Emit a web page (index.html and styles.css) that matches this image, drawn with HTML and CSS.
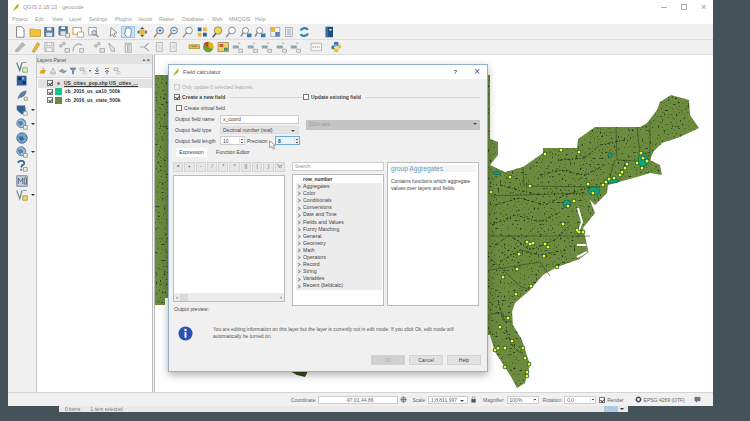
FILE: index.html
```html
<!DOCTYPE html>
<html lang="en">
<head>
    <meta charset="UTF-8">
    <title>QGIS 2.18.13 - geocode</title>
    <link rel="stylesheet" href="styles.css">
</head>
<body>
    <!-- icons used in the toolbars -->
    <svg class="defs" width="0" height="0">
        <symbol id="i-new" viewBox="0 0 16 16"><path d="M3 1h7l3 3v11H3z" fill="#fff" stroke="#666"/></symbol>
        <symbol id="i-folder" viewBox="0 0 16 16"><path d="M1 4h5l1 1h8v9H1z" fill="#f2c23c" stroke="#c8962a"/></symbol>
        <symbol id="i-save" viewBox="0 0 16 16"><path d="M2 2h12v12H2z" fill="#5f7f9f" stroke="#3d556e"/><path d="M5 2h6v4H5z" fill="#e8eef4"/><path d="M4 9h8v5H4z" fill="#dfe5ea"/></symbol>
        <symbol id="i-saveas" viewBox="0 0 16 16"><path d="M1 1h11v11H1z" fill="#5f7f9f" stroke="#3d556e"/><path d="M4 1h5v3H4z" fill="#e8eef4"/><path d="M3 7h7v5H3z" fill="#dfe5ea"/><path d="M10 10h5v5h-5z" fill="#f4f4f4" stroke="#7aa03c"/></symbol>
        <symbol id="i-layout" viewBox="0 0 16 16"><path d="M1 2h11v9H1z" fill="#fff" stroke="#e0a030" stroke-width="1.5"/><path d="M7 8h8v7H7z" fill="#fff" stroke="#999"/></symbol>
        <symbol id="i-find" viewBox="0 0 16 16"><path d="M2 2h10v10H2z" fill="#fff" stroke="#888"/><circle cx="9" cy="9" r="3" fill="#cfe0ee" stroke="#667"/><path d="M11 11l4 4" stroke="#a87" stroke-width="2"/></symbol>
        <symbol id="i-touch" viewBox="0 0 16 16"><path d="M5 2l8 7-4 1 2 4-2 1-2-4-3 3z" fill="#f4f4f4" stroke="#777"/></symbol>
        <symbol id="i-hand" viewBox="0 0 16 16"><path d="M4 8V4l1-1 1 1V2l1-1 1 1v1l1-1 1 1v1l1-1 1 1v6l-2 5H6L3 10z" fill="#fff" stroke="#4a6a8a"/></symbol>
        <symbol id="i-pan" viewBox="0 0 16 16"><circle cx="8" cy="8" r="4" fill="#e8b830"/><path d="M8 1l3 3H5zM8 15l-3-3h6zM1 8l3-3v6zM15 8l-3 3V5z" fill="#3c6a9a"/></symbol>
        <symbol id="i-zin" viewBox="0 0 16 16"><circle cx="9" cy="6" r="4.5" fill="#d8e6f2" stroke="#557"/><path d="M6 9l-5 6" stroke="#b08a50" stroke-width="2"/><path d="M7 6h4M9 4v4" stroke="#3a6a9a"/></symbol>
        <symbol id="i-zout" viewBox="0 0 16 16"><circle cx="9" cy="6" r="4.5" fill="#d8e6f2" stroke="#557"/><path d="M6 9l-5 6" stroke="#b08a50" stroke-width="2"/><path d="M7 6h4" stroke="#3a6a9a"/></symbol>
        <symbol id="i-zplain" viewBox="0 0 16 16"><circle cx="9" cy="6" r="4.5" fill="#fff" stroke="#667"/><path d="M6 9l-5 6" stroke="#999" stroke-width="2"/></symbol>
        <symbol id="i-zlayer" viewBox="0 0 16 16"><path d="M2 2h5v5H2z" fill="#2f5f9f"/><path d="M9 2h5v5H9z" fill="#e8b830"/><path d="M2 9h5v5H2z" fill="#e8b830"/><path d="M9 9h5v5H9z" fill="#2f5f9f"/></symbol>
        <symbol id="i-zyellow" viewBox="0 0 16 16"><circle cx="9" cy="6" r="5" fill="#f2d84a" stroke="#776"/><path d="M6 10l-4 5" stroke="#556" stroke-width="2"/></symbol>
        <symbol id="i-zsheet" viewBox="0 0 16 16"><circle cx="7" cy="6" r="4" fill="#fff" stroke="#667"/><path d="M4 9l-3 5" stroke="#889" stroke-width="2"/><path d="M9 10h6v5H9z" fill="#3f78b0"/></symbol>
        <symbol id="i-table" viewBox="0 0 16 16"><path d="M2 2h12v12H2z" fill="#f3f3f3" stroke="#99a"/><path d="M2 2h6v6H2z" fill="#e8b830"/><path d="M8 8h6v6H8z" fill="#5a86b0"/></symbol>
        <symbol id="i-grid" viewBox="0 0 16 16"><path d="M3 2h9v12H3z" fill="#eee" stroke="#99a"/><path d="M5 5h5M5 8h5M5 11h5" stroke="#6a8aaa"/></symbol>
        <symbol id="i-refresh" viewBox="0 0 16 16"><path d="M13 5A6 6 0 0 0 3 6M3 11a6 6 0 0 0 10-1" fill="none" stroke="#2f7fb8" stroke-width="3"/></symbol>
        <symbol id="i-book" viewBox="0 0 16 16"><path d="M3 1h10v14H3z" fill="#1f4f80"/><path d="M5 1v14" stroke="#7ba0c4"/><path d="M8 4h3v2H8z" fill="#cfe"/></symbol>
        <symbol id="i-pencilg" viewBox="0 0 16 16"><path d="M2 12L11 2l3 3-9 9H2z" fill="#bbb" stroke="#999"/></symbol>
        <symbol id="i-pencily" viewBox="0 0 16 16"><path d="M4 14L11 2l3 2-7 11z" fill="#e8c030" stroke="#b89020"/></symbol>
        <symbol id="i-saveg" viewBox="0 0 16 16"><path d="M2 2h12v12H2z" fill="#ddd" stroke="#aaa"/><path d="M5 2h6v4H5zM4 9h8v5H4z" fill="#f2f2f2" stroke="#bbb"/></symbol>
        <symbol id="i-dotsg" viewBox="0 0 16 16"><path d="M2 5h3v3H2zM6 2h3v3H6zM9 10h6v5H9z" fill="#e4e4e4" stroke="#999"/></symbol>
        <symbol id="i-curveg" viewBox="0 0 16 16"><path d="M1 14C1 4 10 2 13 6" fill="none" stroke="#aaa" stroke-width="1.5"/><path d="M10 10h5v5h-5z" fill="#eee" stroke="#999"/></symbol>
        <symbol id="i-nodeg" viewBox="0 0 16 16"><path d="M2 3l7 6 1 5-5-1z" fill="#e6e6e6" stroke="#999"/></symbol>
        <symbol id="i-trash" viewBox="0 0 16 16"><path d="M3 3h10M4 5h8v10H4zM7 6v8M9 6v8" fill="#eee" stroke="#999"/></symbol>
        <symbol id="i-cutg" viewBox="0 0 16 16"><path d="M2 8h6l6-5M8 8l6 5" fill="none" stroke="#aaa" stroke-width="1.5"/></symbol>
        <symbol id="i-copyg" viewBox="0 0 16 16"><path d="M4 2h8v12H4z" fill="#eee" stroke="#aaa"/><path d="M6 5h4v6H6z" fill="#ddd"/></symbol>
        <symbol id="i-bar" viewBox="0 0 16 16"><path d="M1 5h14v5H1z" fill="#e9c13a" stroke="#a88c20"/><path d="M4 7h8" stroke="#665"/></symbol>
        <symbol id="i-pie" viewBox="0 0 16 16"><circle cx="8" cy="8" r="7" fill="#6f9f30"/><path d="M8 8V1a7 7 0 0 1 6 10z" fill="#e8b020"/><path d="M8 8L2 4a7 7 0 0 1 6-3z" fill="#c83a2a"/></symbol>
        <symbol id="i-labelc" viewBox="0 0 16 16"><path d="M1 2h14v12H1z" fill="#f0d060" stroke="#887"/><path d="M3 4h5v4H3z" fill="#c85a30"/><path d="M9 9h5v4H9z" fill="#4a8a6a"/></symbol>
        <symbol id="i-labelg" viewBox="0 0 16 16"><path d="M2 6h8v4H2z" fill="#8aa" /><path d="M9 3h3M10 11h5v4h-5z" fill="#eee" stroke="#999"/></symbol>
        <symbol id="i-boxg" viewBox="0 0 16 16"><path d="M1 3h14v10H1z" fill="#f7f7f7" stroke="#aaa"/><path d="M3 8h10" stroke="#777" stroke-dasharray="2 1"/></symbol>
        <symbol id="i-python" viewBox="0 0 16 16"><path d="M8 1C4 1 5 3 5 5h4v1H3C1 6 1 11 3 11h2V9c0-1 1-2 2-2h3c1 0 1-1 1-2V3c0-1-1-2-3-2z" fill="#3a76a8"/><path d="M8 15c4 0 3-2 3-4H7v-1h6c2 0 2-5 0-5h-2v2c0 1-1 2-2 2H6c-1 0-1 1-1 2v2c0 1 1 2 3 2z" fill="#e8c030"/></symbol>
        <symbol id="i-vector" viewBox="0 0 16 16"><path d="M1 2l4 11 3-11" fill="none" stroke="#5a7a90" stroke-width="1.6"/><path d="M9 2h5" stroke="#5a7a90"/><path d="M9 9h6v6H9z" fill="#e6f0d0" stroke="#7a9a40"/></symbol>
        <symbol id="i-vectory" viewBox="0 0 16 16"><path d="M1 2l4 11 3-11" fill="none" stroke="#6a8aa0" stroke-width="1.6"/><path d="M9 2h5" stroke="#5a7a90"/><path d="M9 9h6v6H9z" fill="#eed860" stroke="#a89030"/></symbol>
        <symbol id="i-raster" viewBox="0 0 16 16"><path d="M1 1h13v13H1z" fill="#2f5f9f"/><path d="M3 3h4v4H3zM9 8h4v4H9z" fill="#16305c"/><path d="M8 3h3v3H8z" fill="#8fb0d0"/></symbol>
        <symbol id="i-feather" viewBox="0 0 16 16"><path d="M2 14C3 7 8 2 14 2 14 8 9 12 4 12z" fill="#5f7f9f"/><path d="M11 11h4v4h-4z" fill="#eee" stroke="#7a9a40"/></symbol>
        <symbol id="i-shield" viewBox="0 0 16 16"><path d="M1 2h11l1 7-5 5-7-6z" fill="#34608f"/><path d="M10 10h5v5h-5z" fill="#eee" stroke="#999"/></symbol>
        <symbol id="i-globe" viewBox="0 0 16 16"><circle cx="7" cy="7" r="6" fill="#9fbfdc" stroke="#4a7098"/><path d="M3 5h5l1 3-4 2zM9 2l3 3" fill="#5f88ae" stroke="#4a7098"/><path d="M10 10h5v5h-5z" fill="#eee" stroke="#7a9a40"/></symbol>
        <symbol id="i-globed" viewBox="0 0 16 16"><circle cx="8" cy="8" r="7" fill="#7aa2c8" stroke="#33608c"/><path d="M3 6h6l2 4-5 2zM9 2l3 3" fill="#3a6a9a"/></symbol>
        <symbol id="i-query" viewBox="0 0 16 16"><path d="M3 4a4 3 0 1 1 5 3L7 10" fill="none" stroke="#3c6a9a" stroke-width="2.4"/><circle cx="7" cy="13" r="1.4" fill="#3c6a9a"/><path d="M10 10h5v5h-5z" fill="#eee" stroke="#7a9a40"/></symbol>
        <symbol id="i-mssql" viewBox="0 0 16 16"><path d="M1 1h14v14H1z" fill="#bcd0e0" stroke="#668"/><path d="M3 12V4l3 5 3-5v8M11 4h3v8h-3z" fill="none" stroke="#456"/></symbol>
        <symbol id="i-open" viewBox="0 0 16 16"><path d="M1 13l3-7h10l-3 7z" fill="#e8a020"/><path d="M7 2l4 4" stroke="#b86" stroke-width="2"/></symbol>
        <symbol id="i-style" viewBox="0 0 16 16"><path d="M3 14h10M8 2l5 10H3z" fill="#e4e4e4" stroke="#889"/></symbol>
        <symbol id="i-eye" viewBox="0 0 16 16"><path d="M1 8l6-4 2 4 6 0-6 4z" fill="#8aa" stroke="#567"/></symbol>
        <symbol id="i-filter" viewBox="0 0 16 16"><path d="M2 2h12l-5 6v6H7V8z" fill="#7a9aba" stroke="#456"/></symbol>
        <symbol id="i-expr" viewBox="0 0 16 16"><path d="M2 2h8v5H2z" fill="#e8e8e8" stroke="#889"/><path d="M8 9h6v5H8z" fill="#eee" stroke="#aab"/></symbol>
        <symbol id="i-expand" viewBox="0 0 16 16"><path d="M8 1v8M4 6l4 4 4-4" fill="none" stroke="#5a7a90" stroke-width="2"/><path d="M4 13h8" stroke="#5a7a90" stroke-width="2"/></symbol>
        <symbol id="i-collapse" viewBox="0 0 16 16"><path d="M8 15V7M4 10l4-4 4 4" fill="none" stroke="#5a7a90" stroke-width="2"/><path d="M4 3h8" stroke="#c89040" stroke-width="2"/></symbol>
        <symbol id="i-qgis" viewBox="0 0 16 16"><path d="M3 15C5 9 8 4 13 1c0 5-2 9-6 10" fill="#8db030" stroke="#e0b020"/></symbol>
        <symbol id="i-cross" viewBox="0 0 16 16"><circle cx="8" cy="8" r="6" fill="#b8c4c8" stroke="#556"/><path d="M8 1v14M1 8h14" stroke="#334"/></symbol>
        <symbol id="i-lock" viewBox="0 0 16 16"><path d="M3 7h10v8H3z" fill="#556"/><path d="M5 7V4a3 3 0 0 1 6 0v3" fill="none" stroke="#778" stroke-width="1.5"/></symbol>
        <symbol id="i-gear" viewBox="0 0 16 16"><circle cx="8" cy="8" r="5" fill="none" stroke="#445" stroke-width="3.4"/></symbol>
        <symbol id="i-bubble" viewBox="0 0 16 16"><path d="M2 3h12v8H8l-3 3v-3H2z" fill="#6a7a80" stroke="#445"/></symbol>
    </svg>

    <div class="screen">
        <div class="window">
            <div class="titlebar">
                <svg class="title-icon"><use href="#i-qgis"/></svg>
                <span>QGIS 2.18.13 - geocode</span>
                <div class="win-btns">
                    <span class="win-min"></span>
                    <span class="win-max"></span>
                    <span class="win-close">×</span>
                </div>
            </div>
            <div class="menubar">
                <span style="width:23px">Project</span><span style="width:17px">Edit</span><span style="width:17px">View</span><span style="width:20px">Layer</span><span style="width:26px">Settings</span><span style="width:23px">Plugins</span><span style="width:21px">Vector</span><span style="width:23px">Raster</span><span style="width:30px">Database</span><span style="width:17px">Web</span><span style="width:26px">MMQGIS</span><span>Help</span>
            </div>

            <div class="toolbar">
                <svg class="ic"><use href="#i-new"/></svg>
                <svg class="ic"><use href="#i-folder"/></svg>
                <svg class="ic"><use href="#i-save"/></svg>
                <svg class="ic"><use href="#i-saveas"/></svg>
                <svg class="ic"><use href="#i-layout"/></svg>
                <svg class="ic"><use href="#i-find"/></svg>
                <span class="sp6"></span>
                <svg class="ic"><use href="#i-touch"/></svg>
                <svg class="ic ic-on"><use href="#i-hand"/></svg>
                <svg class="ic"><use href="#i-pan"/></svg>
                <span class="sp2"></span>
                <svg class="ic"><use href="#i-zin"/></svg>
                <svg class="ic"><use href="#i-zout"/></svg>
                <svg class="ic"><use href="#i-zplain"/></svg>
                <svg class="ic"><use href="#i-zlayer"/></svg>
                <svg class="ic"><use href="#i-zyellow"/></svg>
                <svg class="ic"><use href="#i-zplain"/></svg>
                <svg class="ic"><use href="#i-zsheet"/></svg>
                <svg class="ic"><use href="#i-zsheet"/></svg>
                <svg class="ic"><use href="#i-table"/></svg>
                <svg class="ic"><use href="#i-grid"/></svg>
                <svg class="ic"><use href="#i-refresh"/></svg>
                <span class="sp11"></span>
                <svg class="ic"><use href="#i-book"/></svg>
            </div>
            <div class="toolbar">
                <svg class="ic"><use href="#i-pencilg"/></svg>
                <svg class="ic"><use href="#i-pencily"/></svg>
                <svg class="ic"><use href="#i-saveg"/></svg>
                <svg class="ic"><use href="#i-dotsg"/></svg>
                <svg class="ic"><use href="#i-curveg"/></svg>
                <span class="sp6"></span>
                <svg class="ic"><use href="#i-dotsg"/></svg>
                <svg class="ic"><use href="#i-nodeg"/></svg>
                <svg class="ic"><use href="#i-trash"/></svg>
                <span class="sp2"></span>
                <svg class="ic"><use href="#i-cutg"/></svg>
                <svg class="ic"><use href="#i-copyg"/></svg>
                <svg class="ic"><use href="#i-copyg"/></svg>
                <span class="sp6"></span>
                <svg class="ic"><use href="#i-bar"/></svg>
                <svg class="ic"><use href="#i-pie"/></svg>
                <svg class="ic"><use href="#i-labelc"/></svg>
                <svg class="ic"><use href="#i-labelg"/></svg>
                <svg class="ic"><use href="#i-labelg"/></svg>
                <svg class="ic"><use href="#i-labelg"/></svg>
                <svg class="ic"><use href="#i-labelg"/></svg>
                <svg class="ic"><use href="#i-labelg"/></svg>
                <span class="sp6"></span>
                <svg class="ic"><use href="#i-boxg"/></svg>
                <span class="sp6"></span>
                <svg class="ic"><use href="#i-python"/></svg>
            </div>

            <div class="main">
                <div class="sidetools">
                    <div class="st"><svg><use href="#i-vector"/></svg></div>
                    <div class="st"><svg><use href="#i-raster"/></svg></div>
                    <div class="st"><svg><use href="#i-feather"/></svg></div>
                    <div class="st"><svg><use href="#i-shield"/></svg><i></i></div>
                    <div class="st"><svg><use href="#i-globe"/></svg><i></i></div>
                    <div class="st"><svg><use href="#i-globed"/></svg></div>
                    <div class="st"><svg><use href="#i-globe"/></svg><i></i></div>
                    <div class="st"><svg><use href="#i-query"/></svg></div>
                    <div class="st"><svg><use href="#i-mssql"/></svg></div>
                    <div class="st"><svg><use href="#i-vectory"/></svg><i></i></div>
                </div>

                <div class="layers">
                    <div class="panel-head">
                        <span>Layers Panel</span>
                        <span class="panel-btns">▪ ×</span>
                    </div>
                    <div class="panel-tools">
                        <svg class="pt"><use href="#i-open"/></svg>
                        <svg class="pt"><use href="#i-style"/></svg>
                        <svg class="pt"><use href="#i-eye"/></svg>
                        <svg class="pt"><use href="#i-filter"/></svg>
                        <svg class="pt"><use href="#i-expr"/></svg>
                        <span class="pt-arrow"></span>
                        <svg class="pt"><use href="#i-expand"/></svg>
                        <svg class="pt"><use href="#i-collapse"/></svg>
                        <svg class="pt"><use href="#i-expr"/></svg>
                    </div>
                    <div class="layer-list">
                        <div class="layer layer-sel"><span class="chk on"></span><span class="dot"></span><u>US_cities_pop.shp US_cities_...</u></div>
                        <div class="layer"><span class="chk on"></span><span class="swatch sw-teal"></span>cb_2016_us_ua10_500k</div>
                        <div class="layer"><span class="chk on"></span><span class="swatch sw-green"></span>cb_2016_us_state_500k</div>
                    </div>
                </div>

                <div class="map">
                    <svg class="map-svg" viewBox="155 55 558 337">
                        <defs>
                            <clipPath id="land"><path d="M155 75H490V139L498 142 498 155 490 165 505 172 523 167 543 153 543 148 577 148 578 139 595 127 640 127 647 123 657 110 660 102 671 95 689 100 690 115 699 128 680 137 662 143 653 152 650 160 660 165 662 175 650 173 637 177 608 185 607 193 595 205 590 200 595 213 583 228 587 245 588 252 577 260 557 267 543 275 530 290 515 303 512 312 513 325 522 340 530 365 525 383 517 388 510 375 495 352 490 335H168V298H165V305H155Z"/></clipPath>
                            <filter id="specks" x="0" y="0" width="100%" height="100%" color-interpolation-filters="sRGB">
                                <feTurbulence type="fractalNoise" baseFrequency="0.5" numOctaves="2" seed="6"/>
                                <feColorMatrix values="0 0 0 0 .12  0 0 0 0 .22  0 0 0 0 .11  7 0 0 0 -4.4"/>
                            </filter>
                        </defs>
                        <path d="M155 75H490V139L498 142 498 155 490 165 505 172 523 167 543 153 543 148 577 148 578 139 595 127 640 127 647 123 657 110 660 102 671 95 689 100 690 115 699 128 680 137 662 143 653 152 650 160 660 165 662 175 650 173 637 177 608 185 607 193 595 205 590 200 595 213 583 228 587 245 588 252 577 260 557 267 543 275 530 290 515 303 512 312 513 325 522 340 530 365 525 383 517 388 510 375 495 352 490 335H168V298H165V305H155Z" class="land"/>
                        <rect x="155" y="75" width="558" height="320" filter="url(#specks)" clip-path="url(#land)"/>
                        <g class="states">
                            <path d="M523 167L524 186 600 187"/>
                            <path d="M490 196L585 193"/>
                            <path d="M616 127L617 160 637 161M637 127L640 155 650 152"/>
                            <path d="M615 160L608 182"/>
                            <path d="M490 236H590"/>
                            <path d="M490 270L540 262 550 276"/>
                            <path d="M490 258L520 286 530 290"/>
                            <path d="M490 314L503 313 504 321 512 322"/>
                            <path d="M650 122L650 160"/>
                        </g>
                        <path class="rivers" d="M495 205L520 198 545 205 565 195 590 187M492 225L515 215 540 222 560 212M495 245L510 235 530 250 555 240 570 225M500 262L520 250 540 255 565 250M540 175L560 170 585 175 605 165M560 160L585 158 600 145 625 140M500 185L518 190 540 195M506 330L512 345 522 355M498 300L503 320"/>
                        <path class="holes" d="M578 208L582 222 579 230M577 245H587M577 257L587 252"/>
                        <path class="bank" d="M586 244L588 252 578 260"/>
                        <g class="urban">
                            <ellipse cx="594" cy="191" rx="6" ry="4"/>
                            <ellipse cx="612" cy="181" rx="7" ry="2"/>
                            <ellipse cx="643" cy="160" rx="5" ry="7"/>
                            <ellipse cx="567" cy="204" rx="4" ry="4"/>
                            <ellipse cx="610" cy="155" rx="2" ry="2.5"/>
                            <ellipse cx="497" cy="173" rx="4" ry="1.5"/>
                        </g>
                        <path class="city-halo" d="M545 154h0M561 150h0M579 152h0M510 177h0M530 186h0M491 192h0M588 184h0M603 185h0M606 182h0M609 179h0M614 178h0M620 175h0M622 172h0M625 168h0M627 164h0M637 163h0M641 153h0M643 158h0M647 161h0M642 168h0M593 193h0M574 201h0M568 206h0M563 224h0M527 242h0M530 244h0M533 243h0M545 244h0M548 247h0M519 254h0M544 256h0M577 230h0M579 232h0M583 232h0M557 267h0M517 269h0M503 277h0M531 286h0M516 294h0M508 318h0M500 327h0M512 341h0M505 348h0M498 348h0M495 350h0M523 348h0M525 358h0M529 364h0M505 367h0M527 372h0M527 376h0"/>
                        <path class="city" d="M545 154h0M561 150h0M579 152h0M510 177h0M530 186h0M491 192h0M588 184h0M603 185h0M606 182h0M609 179h0M614 178h0M620 175h0M622 172h0M625 168h0M627 164h0M637 163h0M641 153h0M643 158h0M647 161h0M642 168h0M593 193h0M574 201h0M568 206h0M563 224h0M527 242h0M530 244h0M533 243h0M545 244h0M548 247h0M519 254h0M544 256h0M577 230h0M579 232h0M583 232h0M557 267h0M517 269h0M503 277h0M531 286h0M516 294h0M508 318h0M500 327h0M512 341h0M505 348h0M498 348h0M495 350h0M523 348h0M525 358h0M529 364h0M505 367h0M527 372h0M527 376h0"/>
                        <path class="scrap" d="M290 371L308 371 305 377 297 375Z"/>
                    </svg>

                    <div class="dialog">
                        <div class="dlg-title">
                            <svg class="title-icon"><use href="#i-qgis"/></svg>
                            <span>Field calculator</span>
                            <span class="dlg-help">?</span>
                            <span class="dlg-close">×</span>
                        </div>
                        <div class="dlg-body">
                            <div class="row-only"><span class="chk off"></span>Only update 0 selected features</div>
                            <div class="row-groups">
                                <div class="grp grp-new"><span class="chk on"></span><b>Create a new field</b><span class="grp-line"></span></div>
                                <div class="grp grp-upd"><span class="chk"></span><b>Update existing field</b><span class="grp-line"></span></div>
                            </div>
                            <div class="row-virtual"><span class="chk"></span>Create virtual field</div>
                            <div class="fields">
                                <div class="field-col">
                                    <div class="f-row"><label>Output field name</label><span class="inp inp-wide">x_coord</span></div>
                                    <div class="f-row"><label>Output field type</label><span class="inp inp-wide inp-combo">Decimal number (real)<i></i></span></div>
                                    <div class="f-row">
                                        <label>Output field length</label><span class="inp inp-spin">10<em></em></span>
                                        <label class="lbl-prec">Precision</label><span class="inp inp-spin inp-focus">8<em></em></span>
                                    </div>
                                </div>
                                <div class="update-combo">2014 rank<i></i></div>
                            </div>
                            <div class="tabs">
                                <span class="tab tab-on">Expression</span>
                                <span class="tab">Function Editor</span>
                            </div>
                            <div class="calc">
                                <div class="calc-left">
                                    <div class="ops">
                                        <span>=</span><span>+</span><span>-</span><span>/</span><span>*</span><span>^</span><span>||</span><span>(</span><span>)</span><span>'\n'</span>
                                    </div>
                                    <div class="editor">
                                        <div class="hscroll"><span>‹</span><span class="thumb"></span><span class="hs-end">›</span></div>
                                    </div>
                                </div>
                                <div class="calc-mid">
                                    <div class="search">Search</div>
                                    <div class="tree">
                                        <div class="tree-top">row_number</div>
                                        <div class="tree-row">Aggregates</div>
                                        <div class="tree-row">Color</div>
                                        <div class="tree-row">Conditionals</div>
                                        <div class="tree-row">Conversions</div>
                                        <div class="tree-row">Date and Time</div>
                                        <div class="tree-row">Fields and Values</div>
                                        <div class="tree-row">Fuzzy Matching</div>
                                        <div class="tree-row">General</div>
                                        <div class="tree-row">Geometry</div>
                                        <div class="tree-row">Math</div>
                                        <div class="tree-row">Operators</div>
                                        <div class="tree-row">Record</div>
                                        <div class="tree-row">String</div>
                                        <div class="tree-row">Variables</div>
                                        <div class="tree-row">Recent (fieldcalc)</div>
                                    </div>
                                </div>
                                <div class="help">
                                    <h3>group Aggregates</h3>
                                    <p>Contains functions which aggregate values over layers and fields.</p>
                                </div>
                            </div>
                            <div class="preview">Output preview:</div>
                            <div class="notice">
                                <svg class="info" viewBox="0 0 16 16">
                                    <circle cx="8" cy="8" r="7.5" fill="#2a52b0"/>
                                    <circle cx="8" cy="4.2" r="1.3" fill="#fff"/>
                                    <path d="M8 6.5v6" stroke="#fff" stroke-width="2"/>
                                </svg>
                                <p>You are editing information on this layer but the layer is currently not in edit mode. If you click Ok, edit mode will automatically be turned on.</p>
                            </div>
                            <div class="dlg-btns">
                                <span class="btn btn-off">OK</span>
                                <span class="btn">Cancel</span>
                                <span class="btn">Help</span>
                            </div>
                        </div>
                        <svg class="cursor" viewBox="0 0 10 14"><path d="M1 1v10l3-2 2 4 2-1-2-4h3z" fill="#fff" stroke="#555" stroke-width=".8"/></svg>
                    </div>
                </div>
            </div>

            <div class="statusbar">
                <span class="s-lbl">Coordinate</span>
                <span class="s-inp s-coord">-97.01,44.86</span>
                <svg class="s-ic s-cross"><use href="#i-cross"/></svg>
                <span class="s-lbl s-scale">Scale</span>
                <span class="s-inp s-combo">1:8,811,997<i></i></span>
                <svg class="s-ic s-lock"><use href="#i-lock"/></svg>
                <span class="s-lbl s-mag">Magnifier</span>
                <span class="s-inp s-spin">100%<em></em></span>
                <span class="s-lbl s-rot">Rotation</span>
                <span class="s-inp s-spin">0.0<em></em></span>
                <span class="chk on s-chk"></span>
                <span class="s-lbl">Render</span>
                <svg class="s-ic s-gear"><use href="#i-gear"/></svg>
                <span class="s-lbl">EPSG:4269 (OTF)</span>
                <svg class="s-ic s-bubble"><use href="#i-bubble"/></svg>
            </div>
        </div>

        <div class="behind">
            <span class="behind-count">0 items</span>
            <span>1 item selected</span>
            <span class="behind-view"></span>
            <span class="behind-arrow"></span>
        </div>
    </div>
</body>
</html>
```

FILE: styles.css
```css
* {
    box-sizing: border-box;
}

html, body {
    margin: 0;
    height: 421px;
    overflow: hidden;
    background: #46525a;
}

body {
    font-family: "Liberation Sans", Arial, sans-serif;
    font-size: 5.3px;
    color: #444;
}

.defs {
    position: absolute;
}

/* the capture is a blurry video frame */
.screen {
    height: 421px;
    padding-left: 8px;
    filter: blur(.5px);
}

.window {
    width: 705px;
    height: 406px;
    background: #f6f6f6;
    display: flex;
    flex-direction: column;
}

.titlebar {
    height: 14px;
    background: #fff;
    display: flex;
    align-items: center;
    padding-left: 4px;
    color: #999;
    font-size: 5.6px;
}

.title-icon {
    width: 8px;
    height: 9px;
    margin-right: 3px;
}

.win-btns {
    margin-left: auto;
    display: flex;
    align-items: center;
    gap: 14px;
    padding-right: 6px;
}

.win-min {
    width: 6px;
    height: 1px;
    background: #aaa;
}

.win-max {
    width: 6px;
    height: 6px;
    border: 1px solid #aaa;
}

.win-close {
    width: 6px;
    color: #999;
    font-size: 9px;
    line-height: 6px;
}

.menubar {
    height: 10px;
    background: #fff;
    display: flex;
    align-items: center;
    padding-left: 4px;
    color: #999;
    font-size: 5.1px;
}

.toolbar {
    height: 16px;
    background: #f0f0f0;
    border-bottom: 1px solid #dcdcdc;
    display: flex;
    align-items: center;
    padding-left: 5px;
}

.toolbar + .toolbar {
    height: 15px;
}

.ic {
    width: 14.5px;
    height: 12px;
    flex: none;
}

.ic-on {
    background: #cde4f7;
    outline: 1px solid #9cc4e4;
    outline-offset: -1px;
}

.sp2 { width: 2px; }
.sp6 { width: 6px; }
.sp11 { width: 11px; }

.main {
    flex: 1;
    display: flex;
    min-height: 0;
}

.sidetools {
    width: 29px;
    padding: 5px 0 0 5px;
    background: #f0f0f0;
    border-right: 1px solid #c8c8c8;
    flex: none;
}

.st {
    height: 14.2px;
    display: flex;
    align-items: center;
    width: 23px;
    padding-left: 3px;
}

.st svg {
    width: 12px;
    height: 12px;
}

.st i {
    margin-left: 3px;
    border-left: 2px solid transparent;
    border-right: 2px solid transparent;
    border-top: 2px solid #333;
}

.layers {
    width: 116px;
    flex: none;
    background: #f0f0f0;
    border-right: 1px solid #bbb;
    display: flex;
    flex-direction: column;
}

.panel-head {
    height: 9px;
    background: #e2e2e2;
    display: flex;
    align-items: center;
    justify-content: space-between;
    padding: 0 2px 0 0;
    color: #555;
    font-size: 5px;
}

.panel-btns {
    color: #333;
    font-size: 6px;
}

.panel-tools {
    height: 13px;
    display: flex;
    align-items: center;
    gap: 2px;
    padding-left: 2px;
}

.pt {
    width: 8px;
    height: 8px;
}

.pt-arrow {
    border-left: 1.5px solid transparent;
    border-right: 1.5px solid transparent;
    border-top: 2px solid #333;
}

.layer-list {
    flex: 1;
    background: #fff;
    padding: 1px 0 0 1px;
    border-top: 1px solid #d8d8d8;
}

.layer {
    height: 8.5px;
    display: flex;
    align-items: center;
    padding-left: 9px;
    font-weight: bold;
    font-size: 4.9px;
    color: #333;
}

.layer-sel {
    background: #e2e2e2;
}

.dot {
    width: 3px;
    height: 3px;
    margin: 0 4px 0 3px;
    border-radius: 50%;
    background: #778;
}

.swatch {
    width: 7px;
    height: 7px;
    margin-right: 3px;
    margin-left: 1px;
}

.sw-teal { background: #14c48a; }
.sw-green { background: #6b8a3e; }

.chk {
    width: 6px;
    height: 6px;
    flex: none;
    border: 1px solid #777;
    background: #fff;
    margin-right: 1px;
    position: relative;
}

.chk.on::after {
    content: "";
    position: absolute;
    left: 1px;
    top: 0;
    width: 2px;
    height: 3px;
    border: solid #444;
    border-width: 0 1px 1px 0;
    transform: rotate(40deg);
}

.chk.off {
    border-color: #ccc;
    background: #eee;
}

.map {
    flex: 1;
    position: relative;
    background: #fff;
    margin-left: 1px;
    border-left: 1px solid #bbb;
}

.map-svg {
    position: absolute;
    left: 0;
    top: 0;
    width: 558px;
    height: 337px;
}

.land { fill: #6c8b3e; }

.states path {
    fill: none;
    stroke: #2a4520;
    stroke-width: .7;
    opacity: .8;
}

.rivers {
    fill: none;
    stroke: #1d3a1e;
    stroke-width: 1;
    stroke-dasharray: 3 1.5 1 2;
}

.holes {
    fill: none;
    stroke: #fff;
    stroke-width: 2;
}

.bank {
    fill: none;
    stroke: #888;
    stroke-width: 1;
}

.urban ellipse {
    fill: #12a27c;
    stroke: #17533a;
    stroke-width: .6;
}

.city-halo {
    fill: none;
    stroke: #15583c;
    stroke-width: 4.6;
    stroke-linecap: round;
}

.city {
    fill: none;
    stroke: #f4f52e;
    stroke-width: 3;
    stroke-linecap: round;
}

.scrap { fill: #2f4a20; }

/* dialog sits over the map */
.dialog {
    position: absolute;
    left: 13px;
    top: 9px;
    width: 320px;
    height: 308px;
    background: #f0f0f0;
    border: 1px solid #8fb2ca;
    box-shadow: 0 3px 8px rgba(0,0,0,.3);
    display: flex;
    flex-direction: column;
    color: #444;
}

.dlg-title {
    height: 14px;
    background: #fff;
    display: flex;
    align-items: center;
    padding-left: 3px;
    font-size: 5.6px;
    color: #555;
}

.dlg-help {
    margin-left: auto;
    font-size: 6px;
    font-weight: bold;
    color: #555;
}

.dlg-close {
    margin: 0 7px 0 17px;
    font-size: 10px;
    line-height: 8px;
    color: #555;
}

.dlg-body {
    flex: 1;
    position: relative;
    padding: 4px 7px 0 4px;
    display: flex;
    flex-direction: column;
}

.row-only {
    height: 8px;
    display: flex;
    align-items: center;
    gap: 1px;
    padding-left: 1px;
    color: #aaa;
    font-size: 5px;
}

.row-groups {
    height: 8px;
    margin-top: 2px;
    display: flex;
    align-items: center;
    font-size: 5.1px;
}

.grp {
    display: flex;
    align-items: center;
    gap: 1px;
}

.grp-new { width: 130px; padding-left: 1px; }
.grp-upd { width: 177px; }

.grp-line {
    flex: 1;
    height: 1px;
    margin-left: 3px;
    background: #d8d8d8;
}

.row-virtual {
    height: 8px;
    margin-top: 3px;
    padding-left: 3px;
    display: flex;
    align-items: center;
    gap: 1px;
    font-size: 5.1px;
}

.fields {
    margin-top: 3px;
    display: flex;
    height: 30px;
}

.field-col {
    width: 127px;
    padding-left: 2px;
    display: flex;
    flex-direction: column;
    gap: 2px;
    font-size: 5px;
}

.f-row {
    height: 8.7px;
    display: flex;
    align-items: center;
}

.f-row label {
    width: 45px;
    flex: none;
    white-space: nowrap;
}

.f-row .lbl-prec {
    width: 28px;
    margin-left: 2px;
}

.inp {
    height: 8.7px;
    display: flex;
    align-items: center;
    padding-left: 2px;
    background: #fff;
    border: 1px solid #ccc;
    position: relative;
}

.inp-wide { width: 79px; }

.inp-combo {
    background: #e4e4e4;
    border-color: #ddd;
}

.inp i, .update-combo i, .s-combo i {
    position: absolute;
    right: 3px;
    top: 3px;
    border-left: 2px solid transparent;
    border-right: 2px solid transparent;
    border-top: 2px solid #444;
}

.inp-spin {
    width: 25px;
}

.inp-spin em, .s-spin em {
    position: absolute;
    right: 1px;
    top: 1px;
    bottom: 1px;
    width: 4px;
    border-left: 1px solid #ddd;
    background: linear-gradient(#555, #555) center 1px / 2px 1px no-repeat,
                linear-gradient(#555, #555) center 4px / 2px 1px no-repeat;
}

.inp-focus {
    border-color: #6fa8d8;
    background: #eaf2fa;
    font-weight: bold;
    color: #124a9a;
}

.update-combo {
    position: relative;
    width: 174px;
    height: 10px;
    margin: 5px 0 0 6px;
    padding-left: 3px;
    background: #c4c4c4;
    color: #999;
    line-height: 10px;
    font-size: 4.8px;
}

.tabs {
    display: flex;
    height: 9px;
    margin-top: 3px;
    padding-left: 3px;
    gap: 6px;
    align-items: center;
    font-size: 5px;
}

.tab {
    padding: 0 3px;
    line-height: 9px;
}

.tab-on {
    background: #fff;
    width: 31px;
    text-align: center;
}

.calc {
    display: flex;
    margin-top: 5px;
    height: 144px;
}

.calc-left {
    width: 112px;
    margin-right: 7px;
    display: flex;
    flex-direction: column;
    flex: none;
}

.ops {
    display: flex;
    gap: 1px;
    height: 10px;
}

.ops span {
    width: 10.3px;
    height: 10px;
    background: #e6e6e6;
    border: 1px solid #d4d4d4;
    text-align: center;
    line-height: 8px;
    font-size: 4.6px;
    color: #555;
    overflow: hidden;
}

.editor {
    height: 127px;
    margin-top: 3px;
    background: #fff;
    border: 1px solid #bbb;
    display: flex;
    align-items: flex-end;
}

.hscroll {
    width: 100%;
    height: 8px;
    background: #ececec;
    display: flex;
    align-items: center;
    padding: 0 2px;
    font-size: 6px;
    gap: 1px;
}

.thumb {
    width: 8px;
    height: 7px;
    margin-left: 1px;
    background: #dadada;
}

.hs-end {
    margin-left: auto;
}

.calc-mid {
    width: 92px;
    margin-right: 3px;
    flex: none;
    display: flex;
    flex-direction: column;
}

.search {
    height: 9px;
    background: #fff;
    border: 1px solid #ccc;
    padding-left: 2px;
    line-height: 7px;
    color: #999;
    font-size: 4.8px;
}

.tree {
    height: 132px;
    margin-top: 3px;
    background: #fff;
    border: 1px solid #bbb;
    padding: 1px 1px 0 3px;
    font-size: 5.2px;
}

.tree-top {
    height: 7.1px;
    line-height: 7.1px;
    padding-left: 7px;
    font-weight: bold;
    font-size: 4.9px;
    color: #333;
}

.tree-row {
    height: 7.1px;
    line-height: 7.1px;
    padding-left: 7px;
    background: #ececec;
    position: relative;
}

.tree-row::before {
    content: "";
    position: absolute;
    left: 1px;
    top: 2.2px;
    width: 2px;
    height: 2px;
    border: solid #888;
    border-width: .7px .7px 0 0;
    transform: rotate(45deg);
}

.help {
    width: 92px;
    flex: none;
    background: #fff;
    border: 1px solid #bbb;
    padding: 2px;
}

.help h3 {
    margin: 0;
    padding-left: 1px;
    background: #f4f4f4;
    color: #6a9cc8;
    font-size: 6.6px;
    font-weight: normal;
    line-height: 7px;
}

.help p {
    margin: 6px 1px 0;
    font-size: 5px;
    line-height: 6.8px;
}

.preview {
    margin-top: -1px;
    height: 8px;
    line-height: 8px;
    padding-left: 1px;
    font-size: 5px;
}

.notice {
    display: flex;
    align-items: center;
    margin-top: 8px;
    padding-left: 5px;
    height: 25px;
}

.info {
    width: 15px;
    height: 15px;
    flex: none;
}

.notice p {
    margin: 0 0 0 20px;
    font-size: 4.9px;
    line-height: 6.3px;
    color: #555;
}

.dlg-btns {
    display: flex;
    justify-content: flex-end;
    gap: 4px;
    margin-top: 9px;
    margin-right: -1px;
}

.btn {
    width: 34px;
    height: 10px;
    background: #e2e2e2;
    border: 1px solid #d2d2d2;
    text-align: center;
    line-height: 8px;
    font-size: 5px;
}

.btn-off {
    color: #aaa;
    background: #d0d0d0;
}

.cursor {
    position: absolute;
    left: 100px;
    top: 75px;
    width: 7px;
    height: 10px;
}

.statusbar {
    height: 14px;
    flex: none;
    background: #f0f0f0;
    border-top: 1px solid #d4d4d4;
    display: flex;
    align-items: center;
    padding-left: 283px;
    color: #666;
    font-size: 5px;
}

.s-inp {
    height: 8px;
    margin-left: 3px;
    background: #fff;
    border: 1px solid #ccc;
    line-height: 6px;
    position: relative;
    padding-left: 2px;
}

.s-coord { width: 80px; text-align: center; }
.s-combo { width: 40px; }
.s-spin { width: 32px; }

.s-ic {
    width: 7px;
    height: 7px;
}

.s-cross { margin-left: 2px; }
.s-scale { margin-left: 5px; }
.s-lock { margin-left: 2px; }
.s-mag { margin-left: 6px; }
.s-rot { margin-left: 4px; }
.s-chk { margin: 0 2px 0 3px; }
.s-gear { margin: 0 2px 0 11px; }
.s-bubble { margin-left: 9px; }

.behind {
    width: 569px;
    height: 6px;
    margin-left: 51px;
    background: #e9e9e9;
    display: flex;
    align-items: center;
    padding-left: 6px;
    gap: 10px;
    color: #777;
    font-size: 4.8px;
}

.behind-view {
    width: 14px;
    height: 6px;
    margin-left: auto;
    background: #a8cde4;
}

.behind-arrow {
    margin: 0 4px 0 -8px;
    border-left: 2px solid transparent;
    border-right: 2px solid transparent;
    border-top: 2px solid #333;
}
```
